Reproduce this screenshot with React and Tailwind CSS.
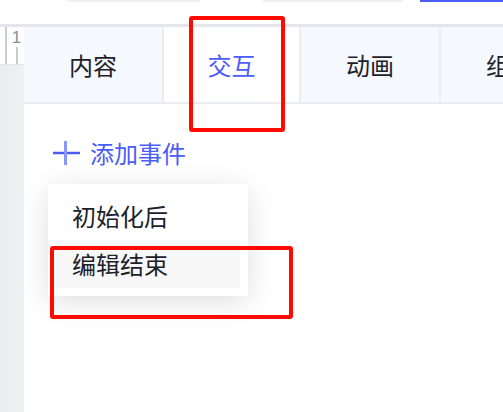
export default function App() {
  const font = { fontFamily: '"Noto Sans CJK SC", "Noto Sans", sans-serif' };
  return (
    <div className="relative w-[503px] h-[412px] bg-white overflow-hidden flex flex-col" style={font}>
      {/* top strip */}
      <div className="h-[24px] flex items-start shrink-0">
        <div className="ml-[67px] w-[133px] h-[2px] bg-[#eef0f6]" />
        <div className="ml-[63px] w-[140px] h-[2px] bg-[#eef0f6]" />
        <div className="ml-[17px] flex-1 h-[2px] bg-[#4b5cf8]" />
      </div>
      <div className="h-[3px] bg-[#e4e6eb] shrink-0" />
      <div className="flex flex-1">
        {/* left column */}
        <div className="w-[24px] flex flex-col shrink-0">
          <div className="h-[37px] bg-white flex">
            <div className="ml-[5px] w-[2px] bg-[#c9ccd2]" />
            <div className="ml-[5px] flex flex-col items-center w-[9px]">
              <span className="text-[17px] leading-[18px] text-[#8a8f99] mt-[2px]" style={{ fontFamily: '"Liberation Sans", sans-serif' }}>1</span>
              <div className="flex-1 w-[2px] bg-[#c9ccd2]" />
            </div>
          </div>
          <div className="h-[1px] bg-[#e4e6eb]" />
          <div className="flex-1 bg-gradient-to-r from-[#eaecf0] to-[#f0f1f4]" />
        </div>
        <div className="w-[1px] bg-[#e9ecf1]" />
        {/* main */}
        <div className="flex-1 flex flex-col">
          <div className="flex h-[75px] gap-[2px] bg-[#e9ecf1]">
            <div className="w-[138px] bg-[#f5f8fc] flex items-center justify-center text-[24px] text-[#1d2129]">内容</div>
            <div className="w-[135px] bg-white flex items-center justify-center text-[24px] text-[#4b5cf8]">交互</div>
            <div className="w-[138px] bg-[#f5f8fc] flex items-center justify-center text-[24px] text-[#1d2129]">动画</div>
            <div className="flex-1 bg-[#f5f8fc] flex items-center pl-[45px] text-[24px] text-[#1d2129] overflow-hidden whitespace-nowrap">组件</div>
          </div>
          <div className="h-[2px] bg-[#e9ecf1]" />
          <div className="flex-1 bg-white pt-[36px] pl-[28px]">
            <div className="flex items-center h-[26px] text-[#4b5cf8]">
              <svg width="28" height="26" viewBox="0 0 28 26" className="shrink-0">
                <line x1="1" y1="13" x2="28" y2="13" stroke="#4b5cf8" strokeWidth="2.5" />
                <line x1="13.5" y1="1" x2="13.5" y2="25" stroke="#8a95fb" strokeWidth="3" />
              </svg>
              <span className="ml-[10px] text-[24px] leading-none">添加事件</span>
            </div>
            <div className="mt-[18px] -ml-[4px] w-[200px] bg-white py-[8px] px-[8px] shadow-[0_6px_28px_rgba(0,0,0,0.13)]">
              <div className="h-[48px] flex items-center pl-[16px] text-[24px] text-[#1d2129]">初始化后</div>
              <div className="h-[48px] flex items-center pl-[16px] text-[24px] text-[#1d2129] bg-[#f7f7f7] rounded-[2px]">编辑结束</div>
            </div>
          </div>
        </div>
      </div>
      {/* annotation boxes */}
      <div className="absolute left-[189px] top-[16px] w-[96px] h-[116px] border-[4px] border-[#ff0a00] rounded-[3px]" />
      <div className="absolute left-[50px] top-[246px] w-[243px] h-[73px] border-[4px] border-[#ff0a00] rounded-[3px]" />
    </div>
  );
}
